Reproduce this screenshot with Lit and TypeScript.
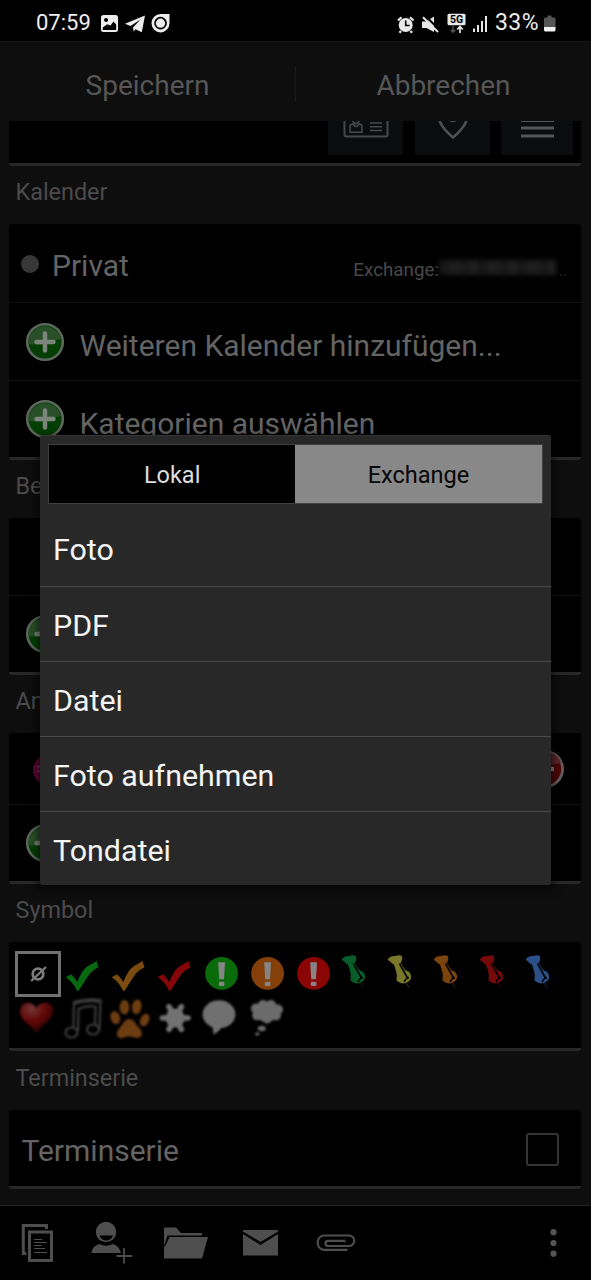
import { LitElement, html, css, svg } from "lit";
import { customElement } from "lit/decorators.js";

const plusIcon = html`<svg class="round" width="40" height="40" viewBox="0 0 40 40">
  <circle cx="20" cy="20" r="17.8" fill="#033f03" stroke="#5c665c" stroke-width="2.6"/>
  <path d="M3.5 22a16.5 16.5 0 0 1 32.5-5q-7 1-13 4t-19.500 1z" fill="#294f29"/>
  <path d="M20 11.500v17M11.500 20h17" stroke="#7c867c" stroke-width="4.400" stroke-linecap="round"/>
</svg>`;

const minusIcon = svg`<g transform="translate(516 0)">
  <circle cx="20" cy="20" r="17.600" fill="#4d0505" stroke="#665c5e" stroke-width="2.800"/>
  <path d="M4 16a16.500 16.500 0 0 1 32-2q-13 3-32 2z" fill="#5b2429"/>
  <path d="M14 20h15" stroke="#867c7c" stroke-width="4.400"/>
</g>`;

const cell = (inner: unknown) => html`<svg width="46" height="46" viewBox="0 0 46 46">${inner}</svg>`;
const check = (c: string) => cell(svg`<path fill=${c} d="M4.700 26.300L10 23.300Q13 26 16.300 31Q21 19 26.300 15.500L35.700 10Q36 13 37.600 16.300Q30 20 26.500 26L17.500 39.700H16Q12 31 4.700 26.300z"/>`);
const alert = (c: string) => cell(svg`<circle cx="22.600" cy="22.300" r="16.400" fill=${c}/><path d="M19.200 11.300h6.800l-1 17h-4.800z" fill="#858585"/><rect x="19.800" y="30.700" width="5.600" height="4.200" rx="1" fill="#858585"/>`);
const pin = (c: string) => cell(svg`<g class="soft"><g fill=${c}><path d="M4.700 9Q6 5 12 5Q18 3.500 19 5.500Q20 9 17.500 12Q11 14.500 9 12.500Q7 9.500 4.700 9z"/><path d="M10.500 12L17.500 11.500L19.500 15Q22 20 25.700 20.500Q28.500 23 28 27.500Q25.500 32 20 32.500Q14 31 13.500 29Q14.500 24 13 20z"/></g><path d="M16.500 12.500L24.500 27" stroke="#000" stroke-width="1.600"/><path d="M21 31Q23 27 26 26.500" fill="none" stroke="#000" stroke-width="1.300"/><path d="M23 31.500L26 36.500" stroke=${c} stroke-width="1" opacity=".5"/></g>`);

const symbols = [
  html`<div class="none">${cell(svg`<circle cx="23" cy="23" r="5.300" fill="none" stroke="#7b7b7b" stroke-width="2.800"/><path d="M16.200 30L31 16" stroke="#7b7b7b" stroke-width="2.400"/>`)}</div>`,
  check("#086a10"), check("#7b4b10"), check("#850708"),
  alert("#096b0a"), alert("#854009"), alert("#8c0505"),
  pin("#075c27"), pin("#78772a"), pin("#7b440d"), pin("#740909"), pin("#2c5089"),
  cell(svg`<defs><radialGradient id="h" cx=".35" cy=".2" r=".75"><stop offset="0" stop-color="#6f3838"/><stop offset=".5" stop-color="#650909"/><stop offset="1" stop-color="#330202"/></radialGradient></defs><path class="blur" fill="url(#h)" d="M21.500 36Q17 30 10 24.500Q5 20 5 14Q6 6 13 6Q18.500 6 21.500 11Q24 5.500 31 5.500Q37.500 7 38.300 13Q38 20 32 25Q25 30 21.500 36z"/>`),
  cell(svg`<g class="blur" fill="none" stroke="#3a3a3a" stroke-width="2.200"><ellipse cx="10.500" cy="35.500" rx="6" ry="5"/><ellipse cx="32" cy="32.500" rx="6" ry="5"/><path d="M12.500 30L13 5Q25 1 39.500 3L38.500 32M17 34L17.500 12Q26 8 34.500 9.500L34 27M14 6.500Q26 3 38 5"/></g>`),
  cell(svg`<g class="blur" fill="#6c3d11"><ellipse cx="8.300" cy="20.700" rx="4.700" ry="6.600" transform="rotate(-18 8.300 20.700)"/><ellipse cx="17.500" cy="10.300" rx="4.800" ry="7.300"/><ellipse cx="29.700" cy="9.800" rx="4.800" ry="7.400" transform="rotate(8 29.700 9.800)"/><ellipse cx="37.700" cy="23" rx="4.400" ry="6.600" transform="rotate(24 37.700 23)"/><path d="M22 22Q27 22 29.500 28Q35 33 35 37Q34 41 30 41Q26 39.500 22 39.500Q18 39.500 15 41.300Q10 41 9.800 37Q10 33 15 28Q18 22 22 22z"/></g>`),
  cell(svg`<g class="blur"><circle cx="22.200" cy="21" r="9.500" fill="#727272"/><path d="M9.500 21h25.500M16 9.700l12.400 22.600M28.400 9.700L16 32.300" stroke="#727272" stroke-width="5.600" stroke-linecap="round"/></g>`),
  cell(svg`<g class="blur" fill="#707070"><ellipse cx="20" cy="17.300" rx="16.400" ry="14"/><path d="M12.500 28Q15 33 14 37.500Q21 35 23.500 28z"/></g>`),
  cell(svg`<g class="blur" fill="#6b6b6b"><ellipse cx="21.700" cy="14.500" rx="14" ry="10"/><circle cx="11" cy="11.500" r="5"/><circle cx="18" cy="8" r="5"/><circle cx="26" cy="8" r="5"/><circle cx="33" cy="12.500" r="5"/><circle cx="31" cy="18.500" r="5"/><circle cx="12" cy="18.500" r="4.800"/><circle cx="22" cy="21.500" r="5"/><ellipse cx="16.800" cy="31.500" rx="4" ry="2.800"/><ellipse cx="12.300" cy="37" rx="2.300" ry="1.600"/></g>`),
];

@customElement("attach-dialog")
class AttachDialog extends LitElement {
  static styles = css`
    :host { display: block; box-sizing: border-box; background: #282828; border-radius: 3px; padding-top: 8px; box-shadow: 0 3px 10px 2px rgba(0,0,0,.65); border-top: 1px solid #343434; height: 450px; }
    .tabs { display: grid; grid-template-columns: 1fr 1fr; margin: 0 8.500px 0 8px; height: 60px; box-sizing: border-box; border: 1px solid #404040; font-size: 23.500px; }
    .tab { display: flex; align-items: center; justify-content: center; background: #000; color: #dedede; padding-top: 4px; }
    .on { background: #888; color: #060606; }
    .rows { padding-top: 8px; }
    .row { display: flex; align-items: center; height: 74px; box-sizing: border-box; padding: 2px 13px 0; font-size: 30.400px; color: #f4f4f4; }
    .row + .row { border-top: 1px solid #4b4b4b; height: 75px; padding-top: 3px; }
  `;
  render() {
    return html`<div class="tabs"><div class="tab"><span>Lokal</span></div><div class="tab on"><span>Exchange</span></div></div>
      <div class="rows">${["Foto", "PDF", "Datei", "Foto aufnehmen", "Tondatei"].map((t) => html`<div class="row">${t}</div>`)}</div>`;
  }
}

@customElement("app-root")
class AppRoot extends LitElement {
  static styles = css`
    :host { display: flex; flex-direction: column; position: relative; width: 591px; height: 1280px; overflow: hidden; background: #0e0e0e; font-family: Roboto, sans-serif; line-height: 1.172; }
    svg { display: block; flex: none; }
    .status { height: 41px; box-sizing: border-box; flex: none; background: #000; color: #ededed; display: flex; align-items: center; padding: 5px 35px 0 36px; font-size: 22px; }
    .status .gap { flex: 1; }
    .time { width: 64px; }
    .level { width: 49px; font-size: 23px; letter-spacing: .4px; }
    .head { height: 80px; flex: none; display: grid; grid-template-columns: 295px 1px 295px; align-items: center; border-top: 1px solid #141414; box-sizing: border-box; font-size: 28px; color: #565656; text-align: center; }
    .head span { padding-top: 9px; }
    .sep { height: 36px; margin-top: 4px; background: #1b1b1b; }
    .list { flex: 1; min-height: 0; overflow: hidden; padding: 0 10px 0 9px; }
    .card { box-sizing: border-box; background: #000; border-bottom: 3px solid #282828; border-radius: 3px; }
    .label { height: 58px; box-sizing: border-box; display: flex; align-items: center; padding: 0 6.500px 4px; font-size: 23.400px; color: #4b4b4b; }
    .symbols + .label { height: 59px; }
    .row { display: flex; align-items: center; height: 77px; }
    .row + .row { border-top: 1px solid #121212; }
    .row.first { height: 78px; }
    .row:last-child { height: 76px; }
    .row.short { height: 71px; }
    .row b { font-weight: 400; font-size: 30px; color: #646464; padding-top: 8px; }
    .row:last-child b { padding-top: 9px; }
    .row.first b { padding-top: 6px; }
    .round { margin: 0 15px 0 15.500px; }
    .dot { width: 18px; height: 18px; border-radius: 50%; background: #373737; margin: 2px 13px 0 12px; }
    .account { margin-left: auto; padding: 14px 12px 0 0; display: flex; align-items: center; font-size: 18.800px; color: #494949; }
    .mask { width: 117px; height: 15px; filter: blur(2.500px); background: repeating-linear-gradient(90deg, #161616 0 9px, #1d1d1d 9px 22px, #181818 22px 31px, #1f1f1f 31px 39px); margin-top: -4px; }
    .dots { color: #1c1c1c; width: 13px; text-align: center; letter-spacing: -1px; }
    .top { height: 45px; display: flex; justify-content: flex-end; gap: 12px; padding-right: 8px; border-radius: 0 0 3px 3px; }
    .btn { height: 34px; width: 75px; background: #0a0c0e; display: flex; justify-content: center; border-radius: 0 0 2px 2px; }
    .btn:last-child { width: 72px; }
    .btn:nth-child(2) { margin-right: -1px; }
    .symbols { height: 109px; padding: 9px 6px 0; display: grid; grid-template-columns: repeat(12, 46px); grid-auto-rows: 46px; align-content: start; }
    .none { box-sizing: border-box; width: 46px; height: 46px; border: 3px solid #707070; display: flex; align-items: center; justify-content: center; }
    .soft { filter: blur(.7px); }
    .blur { filter: blur(1px); }
    .series { height: 79px; display: flex; align-items: center; justify-content: space-between; padding: 0 22px 0 12.500px; font-size: 30px; color: #646464; }
    .series span { padding-top: 5px; }
    .box { width: 33px; height: 33px; box-sizing: border-box; border: 2px solid #343434; border-radius: 3px; margin-top: 2px; }
    .bar { height: 75px; flex: none; box-sizing: border-box; border-top: 1px solid #242424; background: #000; display: flex; align-items: center; padding: 0 34px 0 21px; }
    .more { margin-left: auto; }
    .dialog { position: absolute; left: 40px; top: 435px; width: 511px; }
    .badge { font: 700 10.500px Roboto, sans-serif; }
  `;
  render() {
    return html`
      <div class="status">
        <span class="time">07:59</span>
        <svg width="74" height="20" viewBox="100 13 74 20" fill="#ededed">
          <path fill-rule="evenodd" d="M103.500 15h12q2.500 0 2.500 2.500v12q0 2.500-2.500 2.500h-12q-2.500 0-2.500-2.500v-12q0-2.500 2.500-2.500zM102.800 27.500v2.500h13.400v-5.500l-2.700-3-3 4-3.300-1.200zM106 18a2 2 0 1 0 .1 0z"/>
          <path d="M125 23.800L145 15.500L141.800 32.300L135.500 29.300L133.700 31.500L133 27.500L140.500 19.500L130.500 26z"/>
          <path fill-rule="evenodd" d="M160.500 14H169.500V23a9 9.200 0 1 1-9-9zm0 2.800a6.300 6.300 0 1 0 .1 0z"/><circle cx="160.500" cy="23.200" r="4.600"/>
        </svg>
        <span class="gap"></span>
        <svg width="98" height="21" viewBox="397 12 98 21" fill="#e8e8e8">
          <circle cx="405.700" cy="24" r="7"/><path d="M398 19.500l3.500-3.300M413.500 19.500l-3.500-3.300M401 30l-1.500 1.800M410.500 30l1.500 1.800" stroke="#e8e8e8" stroke-width="2.200"/><path d="M405.700 19.500v5h4" fill="none" stroke="#000" stroke-width="1.600"/>
          <path d="M422 20.500h4.500L434 15.500V31L426.500 27H422z"/><path d="M425.800 15.300L440 29.500" stroke="#000" stroke-width="2"/><path d="M423 16.300L438 31" stroke="#e8e8e8" stroke-width="1.900"/>
          <rect x="447.500" y="12.800" width="18" height="11.400" rx="1.500"/><text class="badge" x="456.500" y="22.200" text-anchor="middle" fill="#000">5G</text>
          <path d="M453 25v6M450.800 28.700l2.200 2.500 2.200-2.500" fill="none" stroke="#555" stroke-width="1.400"/><path d="M460 32v-6M457.200 28.500l2.800-3 2.800 3" fill="none" stroke="#e8e8e8" stroke-width="1.700"/>
          <path d="M473 27.500h2v3.500h-2zM477 24h2v7h-2zM481 20h2v11h-2zM485 15h2v16h-2z"/>
        </svg>
        <span class="level">33%</span>
        <svg width="12" height="19" viewBox="0 0 12 19"><path d="M3.500 1.500h4v2H10q1.500 0 1.500 1.500V13H0V5q0-1.500 1.500-1.500h2z" fill="#555"/><path d="M0 13h11.500v3q0 1.500-1.500 1.500H1.500Q0 17.500 0 16z" fill="#efefef"/></svg>
      </div>
      <div class="head"><span>Speichern</span><i class="sep"></i><span>Abbrechen</span></div>
      <div class="list">
        <div class="card top">
          <div class="btn"><svg width="46" height="18" viewBox="0 0 46 18" fill="none" stroke="#484848"><path d="M1.500 0v13.500q0 2 2 2h39q2 0 2-2V0" stroke-width="2"/><path d="M7 4v7.300h12V4l-3-1q-3 5-6 0zM9.500 0q3 5 7 0" stroke-width="1.500"/><path d="M27 2h12M27 5.700h12M27 9.500h12" stroke-width="1.600"/></svg></div>
          <div class="btn"><svg width="30" height="19" viewBox="0 0 30 19" fill="none" stroke="#505050"><path d="M1.500 0Q5 8 15 16.500Q25 8 28.500 0" stroke-width="2.600"/><path d="M12 0q3 1.500 6 0" stroke-width="1"/></svg></div>
          <div class="btn"><svg width="33" height="18" viewBox="0 0 33 18" fill="#555"><path d="M0 0h33v1H0zM0 5.600h33v3H0zM0 13.500h33v3H0z"/></svg></div>
        </div>
        <div class="label">Kalender</div>
        <div class="card">
          <div class="row first"><i class="dot"></i><b>Privat</b><div class="account">Exchange:<i class="mask"></i><span class="dots">..</span></div></div>
          <div class="row">${plusIcon}<b>Weiteren Kalender hinzufügen...</b></div>
          <div class="row">${plusIcon}<b>Kategorien auswählen</b></div>
        </div>
        <div class="label">Bezug</div>
        <div class="card"><div class="row"></div><div class="row">${plusIcon}</div></div>
        <div class="label">Anlage</div>
        <div class="card">
          <div class="row short"><svg width="572" height="40" viewBox="0 0 572 40"><circle cx="39" cy="21" r="15" fill="#5c0634"/><path d="M28 17.500h4M28 22.500h4" stroke="#75325a" stroke-width="1.800"/>${minusIcon}</svg></div>
          <div class="row">${plusIcon}</div>
        </div>
        <div class="label">Symbol</div>
        <div class="card symbols">${symbols}</div>
        <div class="label">Terminserie</div>
        <div class="card series"><span>Terminserie</span><i class="box"></i></div>
      </div>
      <div class="bar">
        <svg width="340" height="48" viewBox="21 1219 340 48" fill="#4e4e4e">
          <path d="M23.300 1255V1225.500H46.500v3.500M21.800 1253.500h4.500" fill="none" stroke="#4e4e4e" stroke-width="3"/><rect x="29.500" y="1232" width="22" height="28.500" fill="none" stroke="#4e4e4e" stroke-width="3"/><path d="M34 1239.500h8M34 1242.500h13M34 1245.500h8M34 1248.500h11M34 1252.500h13" stroke="#4e4e4e" stroke-width="1"/>
          <circle cx="106" cy="1232" r="10.200"/><path d="M99.500 1235.500h13.500q-2 5-6.750 5t-6.750-5z" fill="#000"/><path d="M91.500 1253Q92.500 1245.500 99.500 1244Q106 1247.500 113 1244Q119 1245.500 121 1253z"/><path d="M124 1248v15.500M116.500 1256h15.500" stroke="#4e4e4e" stroke-width="1.800"/>
          <path d="M164 1258.500V1227.500h12l5 5.500h21v2.500h-34.500l-3.500 11h1l4.500-9.500H208l-6 21.500z"/>
          <path d="M243 1230h35v1.500l-17.500 10.500-17.500-10.500zM243 1234l17.500 11 17.500-11v21.500h-35z"/>
          <path d="M347.500 1249.800H323.500a7.300 7.300 0 0 1 0-14.300H349a4.800 4.800 0 0 1 0 10.500H328a2.600 2.600 0 0 1 0-5.200H345.500" fill="none" stroke="#4e4e4e" stroke-width="2.200"/>
        </svg>
        <svg class="more" width="7" height="30" viewBox="0 0 7 30" fill="#555"><circle cx="3.500" cy="4.200" r="3.100"/><circle cx="3.500" cy="15" r="3.100"/><circle cx="3.500" cy="25.700" r="3.100"/></svg>
      </div>
      <attach-dialog class="dialog"></attach-dialog>`;
  }
}
